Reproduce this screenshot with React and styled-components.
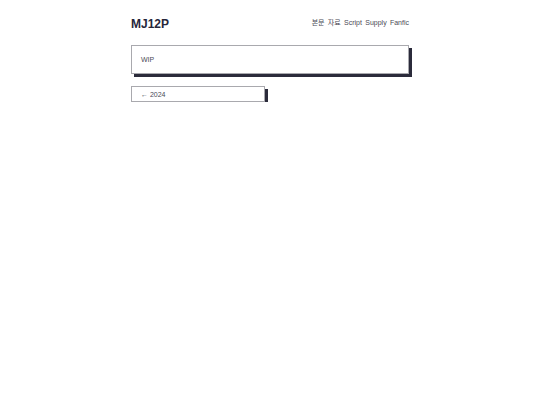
import React from 'react';
import styled, { createGlobalStyle } from 'styled-components';

const Global = createGlobalStyle`
  body {
    margin: 0;
    background: #fff;
    font-family: "Liberation Sans", Arial, "Noto Sans CJK KR", sans-serif;
    color: #2b2b3b;
  }
`;

const Page = styled.div`
  width: 278px;
  margin: 0 auto;
  padding-top: 18px;
`;

const Header = styled.header`
  display: flex;
  justify-content: space-between;
  align-items: center;
  height: 12px;
`;

const Title = styled.h1`
  margin: 0;
  font-size: 12px;
  line-height: 12px;
  font-weight: bold;
  color: #26263a;
`;

const Nav = styled.nav`
  display: flex;
  gap: 3.3px;
  font-size: 7px;
  line-height: 7px;
  margin-top: -4px;
`;

const NavLink = styled.a`
  color: #4a4a55;
  text-decoration: none;
`;

const Main = styled.main`
  margin-top: 15px;
  display: grid;
  grid-template-columns: 1fr 1fr;
  gap: 12px 10px;
`;

const Card = styled.div`
  grid-column: ${(p) => (p.$wide ? '1 / -1' : 'auto')};
  box-sizing: border-box;
  height: ${(p) => (p.$wide ? '29px' : '16px')};
  border: 1px solid #a9a9ae;
  box-shadow: 3px 3px 0 #2b2b3b;
  background: #fff;
  display: flex;
  align-items: center;
  padding-left: 9px;
  font-size: 7px;
  color: #4a4a55;
`;

export default function App() {
  return (
    <>
      <Global />
      <Page>
        <Header>
          <Title>MJ12P</Title>
          <Nav>
            <NavLink href="#">본문</NavLink>
            <NavLink href="#">자료</NavLink>
            <NavLink href="#">Script</NavLink>
            <NavLink href="#">Supply</NavLink>
            <NavLink href="#">Fanfic</NavLink>
          </Nav>
        </Header>
        <Main>
          <Card $wide>WIP</Card>
          <Card>← 2024</Card>
        </Main>
      </Page>
    </>
  );
}
